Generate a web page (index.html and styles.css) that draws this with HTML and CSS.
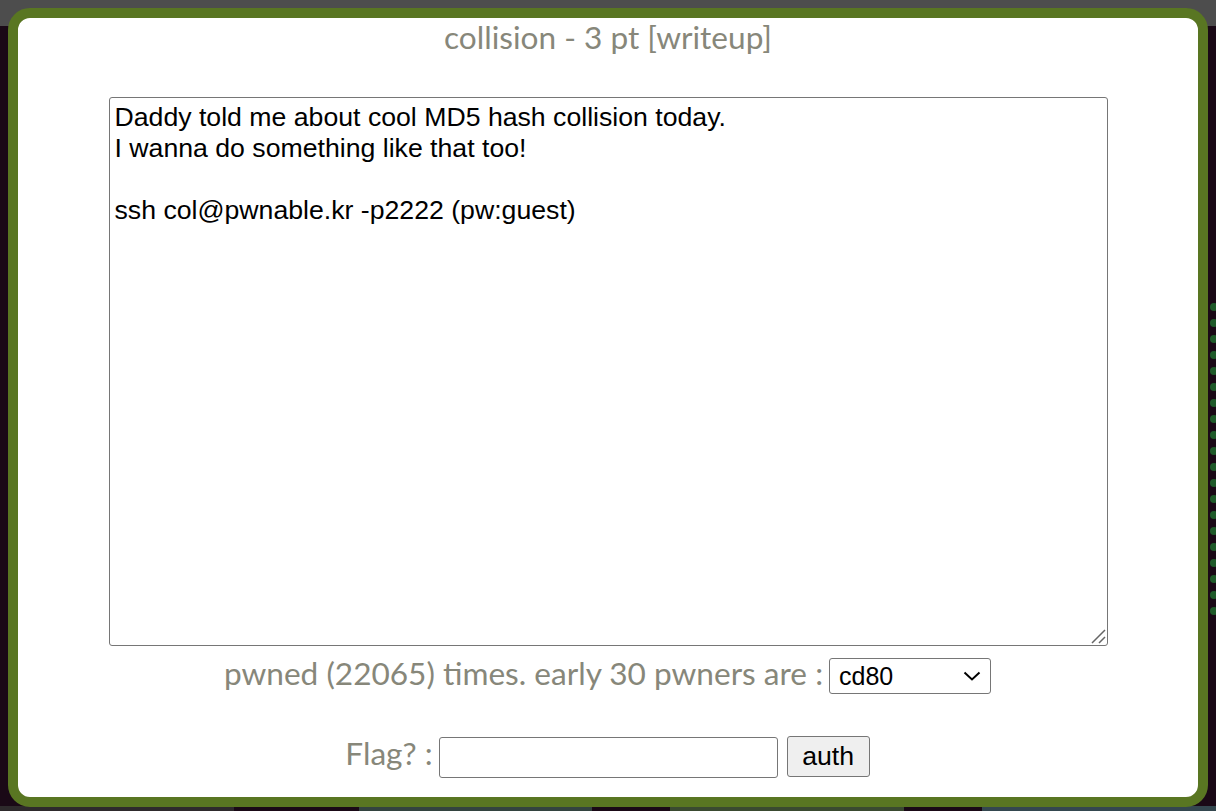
FILE: index.html
```html
<!DOCTYPE html>
<html>
<head>
<meta charset="utf-8">
<link rel="stylesheet" href="styles.css">
</head>
<body>
<div class="topbar"></div>
<div class="dots">
  <span></span><span></span><span></span><span></span><span></span><span></span><span></span><span></span><span></span><span></span><span></span><span></span><span></span><span></span><span></span><span></span><span></span><span></span><span></span><span></span>
</div>
<div class="strip">
  <span class="s1"></span><span class="s2"></span><span class="s3"></span><span class="s4"></span><span class="s5"></span><span class="s6"></span><span class="s7"></span>
</div>
<div class="modal">
  <div class="title">collision - 3 pt [writeup]</div>
  <div class="descwrap">
    <textarea class="desc">Daddy told me about cool MD5 hash collision today.
I wanna do something like that too!

ssh col@pwnable.kr -p2222 (pw:guest)</textarea>
    <svg class="grip" width="16" height="16" viewBox="0 0 16 16"><path d="M15 2 L2 15 M15 9 L9 15" stroke="#666" stroke-width="1.5" fill="none"/></svg>
  </div>
  <div class="row pwned">
    <span class="label">pwned (22065) times. early 30 pwners are :</span>
    <span class="pickwrap">
      <select class="pick"><option>cd80</option></select>
      <svg class="chev" width="18" height="10" viewBox="0 0 18 10"><path d="M1.5 1.5 L9 8.5 L16.5 1.5" stroke="#000" stroke-width="2" fill="none"/></svg>
    </span>
  </div>
  <div class="row flag">
    <span class="label">Flag? :</span>
    <input class="flaginput" type="text">
    <button class="auth">auth</button>
  </div>
</div>
</body>
</html>
```
FILE: styles.css
```css
html, body {
  margin: 0;
  padding: 0;
  width: 1216px;
  height: 811px;
  overflow: hidden;
  background: #1a0916;
  font-family: "Lato", sans-serif;
}
.topbar {
  position: absolute;
  left: 0;
  top: 0;
  width: 1216px;
  height: 26px;
  background: #4d4d4d;
}
.dots {
  position: absolute;
  left: 1210px;
  top: 303px;
  display: flex;
  flex-direction: column;
  gap: 8px;
}
.dots span {
  width: 8px;
  height: 8px;
  border-radius: 50%;
  background: #1f5a2a;
}
.strip {
  position: absolute;
  left: 0;
  top: 806px;
  width: 1216px;
  height: 5px;
  display: flex;
  gap: 4px;
}
.strip span { flex: 1; background: #2e2a2c; }
.strip .s2 { background: #1a0916; flex: 0.5; }
.strip .s3 { background: #33433f; }
.strip .s4 { background: #1a0916; flex: 0.3; }
.strip .s5 { background: #3a4a30; }
.strip .s6 { background: #1a0916; flex: 0.3; }
.strip .s7 { background: #34474f; }
.modal {
  position: absolute;
  left: 8px;
  top: 8px;
  width: 1200px;
  height: 799px;
  box-sizing: border-box;
  border: 10px solid #597622;
  border-radius: 22px;
  background: #ffffff;
  display: flex;
  flex-direction: column;
  align-items: center;
}
.title {
  margin-top: -1px;
  font-family: "Lato", sans-serif;
  font-size: 31.6px;
  line-height: 40px;
  color: #87877a;
}
.descwrap {
  position: relative;
  margin-top: 40px;
  width: 999px;
  height: 549px;
}
.desc {
  display: block;
  width: 999px;
  height: 549px;
  box-sizing: border-box;
  padding: 4px 5px;
  border: 1px solid #767676;
  border-radius: 3px;
  font-family: "Liberation Sans", Arial, sans-serif;
  font-size: 26.67px;
  line-height: 31px;
  color: #000;
  resize: none;
}
.grip {
  position: absolute;
  right: 2px;
  bottom: 2px;
}
.row {
  display: flex;
  align-items: baseline;
  justify-content: center;
}
.label {
  font-family: "Lato", sans-serif;
  font-size: 31.6px;
  color: #87877a;
}
.pwned {
  margin-top: 8px;
  margin-left: -1px;
}
.pickwrap {
  position: relative;
  margin-left: 6px;
}
.pick {
  -webkit-appearance: none;
  appearance: none;
  width: 162px;
  height: 36px;
  box-sizing: border-box;
  border: 1px solid #767676;
  border-radius: 3px;
  background: #fff;
  font-family: "Liberation Sans", Arial, sans-serif;
  font-size: 25px;
  padding: 0 9px;
  color: #000;
}
.chev {
  position: absolute;
  right: 10px;
  top: 13px;
  pointer-events: none;
}
.flag {
  margin-top: 40px;
  margin-left: -1px;
}
.flaginput {
  margin-left: 6px;
  width: 339px;
  height: 41px;
  box-sizing: border-box;
  border: 1px solid #767676;
  border-radius: 3px;
  font-size: 24px;
}
.auth {
  margin-left: 9px;
  width: 83px;
  height: 41px;
  box-sizing: border-box;
  border: 1px solid #767676;
  border-radius: 3px;
  background: #efefef;
  font-family: "Liberation Sans", Arial, sans-serif;
  font-size: 26.67px;
  color: #000;
  padding: 0;
}
```
